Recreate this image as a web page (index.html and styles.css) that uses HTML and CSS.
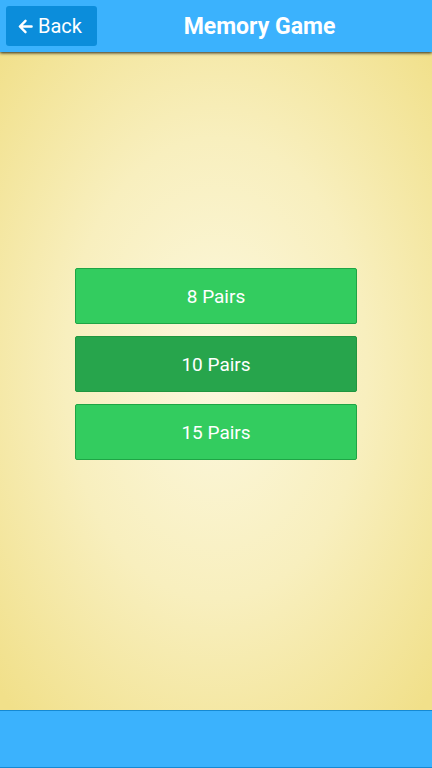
FILE: index.html
```html
<!DOCTYPE html>
<html lang="en">
    <head>
        <title>Memory Game</title>
        <meta charset="utf-8">
        <meta name="viewport" content="width=device-width, initial-scale=1">
        <link rel="stylesheet" href="styles.css">
    </head>
    <body>
        <div class="header">
            <a class="back-button" href="#">
                <svg class="back-arrow" viewBox="0 0 16 16" width="15" height="15">
                    <path d="M8 2 L2 8 L8 14 M2.5 8 L14.5 8" fill="none" stroke="white" stroke-width="2.6" stroke-linecap="round" stroke-linejoin="round"/>
                </svg>
                Back
            </a>
            <h1>Memory Game</h1>
        </div>
        <div class="content">
            <div class="menu">
                <button class="pairs">8 Pairs</button>
                <button class="pairs selected">10 Pairs</button>
                <button class="pairs">15 Pairs</button>
            </div>
        </div>
        <div class="footer"></div>
    </body>
</html>
```
FILE: styles.css
```css
html, body {
  margin: 0;
  height: 100%;
}

body {
  display: flex;
  flex-direction: column;
  font-family: Roboto, "Liberation Sans", Arial, sans-serif;
  background: radial-gradient(ellipse 70% 60% at 50% 48%, #fcf8df 0%, #f8efbe 50%, #f1e08a 100%);
}

.header {
  height: 52px;
  flex: none;
  display: flex;
  align-items: center;
  padding-left: 6px;
  background: #3bb2fd;
  box-shadow: 0 1px 3px rgba(0, 0, 0, 0.85);
  position: relative;
  z-index: 1;
}

.back-button {
  display: flex;
  align-items: center;
  gap: 5px;
  width: 91px;
  height: 40px;
  box-sizing: border-box;
  padding-left: 12px;
  color: white;
  text-decoration: none;
  font-size: 20px;
  background: #0b8ddb;
  border-radius: 3px;
}

.back-arrow {
  margin-top: 1px;
}

h1 {
  flex: 1;
  margin: 0;
  padding-right: 10px;
  text-align: center;
  color: white;
  font-size: 23px;
  font-weight: bold;
}

.content {
  flex: 1;
  display: flex;
  align-items: center;
  justify-content: center;
  padding-bottom: 34px;
}

.menu {
  display: flex;
  flex-direction: column;
  gap: 12px;
  width: 282px;
}

.pairs {
  height: 56px;
  border: 1px solid #1fa545;
  border-radius: 2px;
  background: #33cc5f;
  color: white;
  font-family: Roboto, "Liberation Sans", Arial, sans-serif;
  font-size: 19px;
}

.pairs.selected {
  background: #27a54c;
  border-color: #20963f;
}

.footer {
  height: 56px;
  flex: none;
  background: #3bb2fd;
  border-top: 1px solid #1589d2;
  border-bottom: 1px solid #1589d2;
}
```
